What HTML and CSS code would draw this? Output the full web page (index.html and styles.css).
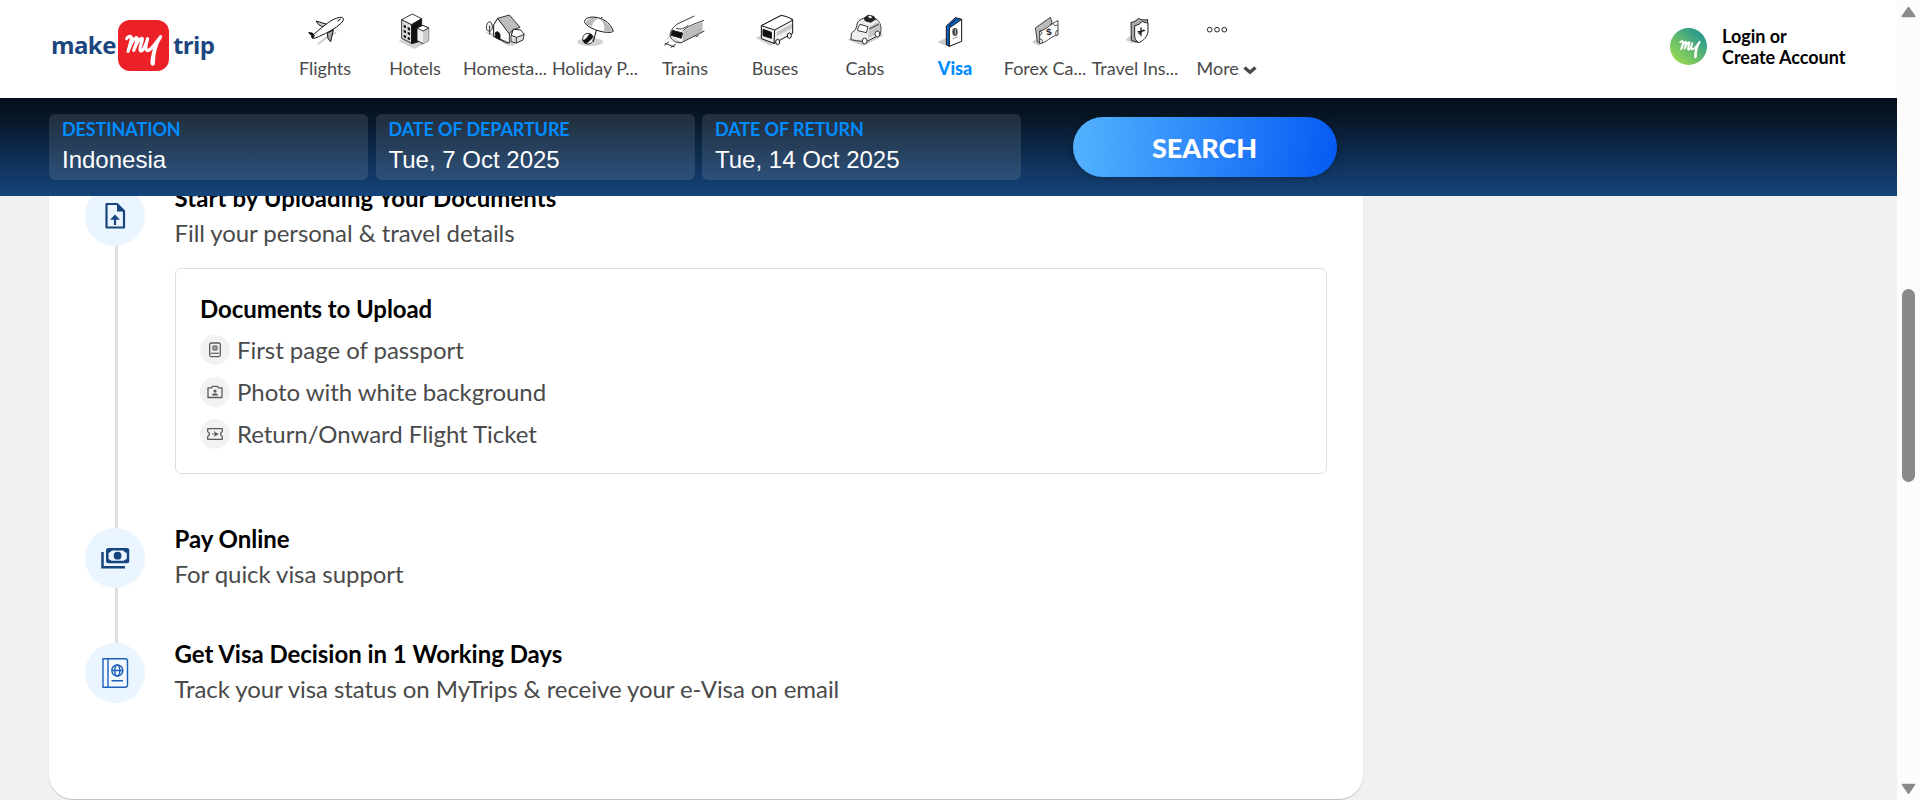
FILE: index.html
```
<!DOCTYPE html>
<html lang="en">
<head>
<meta charset="utf-8">
<title>Indonesia Visa - MakeMyTrip</title>
<link rel="stylesheet" href="styles.css">
</head>
<body>
<div class="viewport">
<div class="page">
  <header class="header">
    <a class="logo">
      <span class="logo-word">make</span>
      <svg class="logo-my" viewBox="234 60 153 153"><rect x="234" y="60" width="153" height="153" rx="36" fill="#ec2127"/><path d="M260 116c3-6 13-10 14-3 1 9-7 29-10 41 6-16 16-38 24-41 7-1 2 14-7 38 8-19 16-35 24-36 8 0-10 30-4 37 7 5 16-16 22-36-6 19-8 36 0 36 12-2 23-22 39-42-16 24-22 50-22 80 0 4-4 3-4 0 0-22 9-52 18-66" fill="none" stroke="#fff" stroke-width="9.500" stroke-linecap="round" stroke-linejoin="round"/></svg>
      <span class="logo-word">trip</span>
    </a>
    <nav class="nav">
      <a class="nav-item">
        <svg class="nav-icon" viewBox="0 0 270 150"><path d="M110 131l34-26 27-11-4 8-22 10-28 22z" fill="#d2d2d2"/><g stroke="#111" stroke-width="3" stroke-linejoin="round"><path d="M138 72l-30-9 8 11 15 8z" fill="#ccc"/><path d="M96 108c12-12 27-23 42-35 18-14 33-21 46-21 9 1 8 9 0 17-17 17-42 29-66 40-13 6-25 10-22-1z" fill="#fff"/><path d="M142 99l2 17 8 9 8-35z" fill="#aaa"/><path d="M86 98l11 1 6 8-5 8-4-9z" fill="#111"/><path d="M172 63l10-6" fill="none"/></g></svg>
        <span class="nav-label">Flights</span>
      </a>
      <a class="nav-item">
        <svg class="nav-icon" viewBox="270 0 270 150"><path d="M356 124l12-8 35 14 20-2 10 4-30 15z" fill="#d2d2d2"/><g stroke="#111" stroke-width="2.5" stroke-linejoin="round"><path d="M365 59l30 15v56l-30-15z" fill="#ddd"/><path d="M365 59l32-17 28 14-30 18z" fill="#fff"/><path d="M395 74l30-18v67l-30 8z" fill="#111"/><path d="M411 84l18-8 17 8v38l-17 9-18-9z" fill="#eee"/><path d="M429 93l17-9v38l-17 9z" fill="#ccc" stroke="none"/><path d="M411 84l18 9 17-9-17-8z" fill="#fff"/></g><path d="M371 74l7 3v8l-7-3zm12 7l7 3v8l-7-3zM371 89l7 3v8l-7-3zm12 6l7 3v8l-7-3zM371 104l7 3v8l-7-3zm12 6l7 3v8l-7-3z" fill="#111"/></svg>
        <span class="nav-label">Hotels</span>
      </a>
      <a class="nav-item">
        <svg class="nav-icon" viewBox="540 0 270 150"><path d="M614 96l27 3 65 28 26-9-34 19-16-1z" fill="#d2d2d2"/><g stroke="#111" stroke-width="2.5" stroke-linejoin="round"><path d="M628 65c-8 2-12 20-6 26 5 5 14 1 15-6 1-10-2-19-9-20zM629 77v27" fill="#eee"/><path d="M641 109V75l12-20 33 41v33l-9-1z" fill="#fff"/><path d="M641 75l12-20 35 41v33l-47-20z" fill="#fff"/><path d="M653 55l35-10 32 37-20 7-13 12z" fill="#bdbdbd"/><path d="M646 112V98c4-6 14-1 14 7v14z" fill="#111"/><path d="M693 106l7-18 22 3 10 14-3 15-20 9-16-4z" fill="#ddd"/><path d="M700 88l22 2 11 13-23 9-16-6z" fill="#fff"/><path d="M709 112v15" fill="none"/></g></svg>
        <span class="nav-label">Homesta...</span>
      </a>
      <a class="nav-item">
        <svg class="nav-icon" viewBox="810 0 270 150"><ellipse cx="931" cy="126" rx="39" ry="12" fill="#d2d2d2"/><g stroke="#111" stroke-width="3" stroke-linejoin="round"><path d="M951 84l-11 41M964 56l2-5" fill="none"/><path d="M914 67c-3-25 70-23 86 27-13 10-74-4-86-27z" fill="#fff"/></g><path d="M918 69c1-11 16-18 39-13-13 2-21 15-20 24-8-3-14-6-19-11zM958 57c11 8 18 20 14 36 11 3 20 4 26 2-5-16-19-30-40-38z" fill="#bbb"/><g stroke="#111" stroke-width="2.5"><circle cx="924" cy="116" r="16" fill="#fff"/><path d="M909 122c7-2 16-12 20-20 5 1 8 4 9 8-5 10-15 19-23 20z" fill="#111"/></g></svg>
        <span class="nav-label">Holiday P...</span>
      </a>
      <a class="nav-item">
        <svg class="nav-icon" viewBox="30 0 270 150"><path d="M102 127l19-18 27 22 50-26-6-12-76 16z" fill="#ccc"/><path d="M138 83l53-35 33 14v34l-67 31-35-18z" fill="#fff"/><path d="M160 95c20-18 38-22 58-29v28l-61 31z" fill="#bdbdbd"/><g fill="none" stroke="#111" stroke-width="2.500" stroke-linejoin="round"><path d="M193 48l-49 23c-15 8-23 24-24 34 4 18 19 24 34 23l69-35M158 94c12-15 32-21 64-33M138 85c18 5 23 0 37-9M105 130l29 11M103 136l14-11M122 143l16-11M197 110l9-3"/><path d="M127 91l31 8-4 16-31-9z" fill="#111"/></g></svg>
        <span class="nav-label">Trains</span>
      </a>
      <a class="nav-item">
        <svg class="nav-icon" viewBox="300 0 270 150"><path d="M377 113l18-9 35 28-9 6z" fill="#d2d2d2"/><g stroke="#111" stroke-width="3" stroke-linejoin="round"><path d="M394 77l60-31 34 12v42l-56 30-38-14z" fill="#eee"/><path d="M394 77l58-30c6-2 36 8 35 14l-53 29z" fill="#fff"/><path d="M434 90l-2 42" fill="none"/><path d="M399 88l25 9v18l-25-8z" fill="#111"/><path d="M440 96l46-25v14l-46 23z" fill="#c6c6c6" stroke="none"/><ellipse cx="443" cy="126" rx="6" ry="8" fill="#fff"/><ellipse cx="478" cy="107" rx="6" ry="8" fill="#fff"/></g></svg>
        <span class="nav-label">Buses</span>
      </a>
      <a class="nav-item">
        <svg class="nav-icon" viewBox="570 0 270 150"><path d="M653 119l21-11 90-4-64 34z" fill="#ccc"/><g stroke="#111" stroke-width="2.5" stroke-linejoin="round"><path d="M663 119l1-19 13-12 6-21c8-14 39-19 55-10 13 7 18 24 13 47l-43 21-28-3z" fill="#eee"/><path d="M719 80l28-17c4 11 4 22 2 34l-36 19z" fill="#c6c6c6" stroke="none"/><path d="M683 86l7-13 24 7-5 18-25-6z" fill="#fff"/><path d="M717 87l29-14" fill="none"/><path d="M703 54l11-8 17 3 5 9-14 9-17-5z" fill="#222"/><path d="M710 51l9-5 11 5-8 5z" fill="#fff"/><ellipse cx="704" cy="123" rx="7" ry="9" fill="#fff"/><ellipse cx="742" cy="102" rx="7" ry="9" fill="#fff"/></g></svg>
        <span class="nav-label">Cabs</span>
      </a>
      <a class="nav-item active">
        <svg class="nav-icon" viewBox="0 0 270 150"><path d="M82 126l27-13v26z" fill="#ccc"/><g stroke="#111" stroke-width="3" stroke-linejoin="round"><path d="M109 78l27-25 19 5-37 28v53l-9-5z" fill="#0a6ad0"/><path d="M118 84l37-26v66l-37 15z" fill="#fff"/><path d="M116 79l24-23" fill="none"/></g><ellipse cx="135" cy="96" rx="8" ry="12" fill="#444"/><path d="M136 87v17" stroke="#fff" stroke-width="2"/><path d="M129 116l14-6" stroke="#555" stroke-width="2"/></svg>
        <span class="nav-label">Visa</span>
      </a>
      <a class="nav-item">
        <svg class="nav-icon" viewBox="120 0 270 150"><path d="M216 126l18-11 10 15-7 7z" fill="#ccc"/><g stroke="#222" stroke-width="2.5" stroke-linejoin="round"><path d="M226 84l45-32 5 16-36 60-8-3z" fill="#bbb"/><path d="M239 93c20-3 34-23 55-31v43c-23 3-34 24-55 26z" fill="#fff"/><path d="M239 93c8 0 8 8 1 14M294 91c-7 0-8 8-6 15M240 117c7 0 8 5 6 12M280 70c0 7 5 8 13 5" fill="none"/></g><text x="259" y="106" class="dollar" transform="rotate(-8 266 95)">$</text></svg>
        <span class="nav-label">Forex Ca...</span>
      </a>
      <a class="nav-item">
        <svg class="nav-icon" viewBox="390 0 270 150"><path d="M497 119l17-13 15 23-15-1zM505 31h12" fill="#ccc" stroke="#ddd"/><g stroke="#222" stroke-width="3" stroke-linejoin="round"><path d="M513 67c8 0 17-5 22-12 9 5 17 6 28 4l-1 37c-5 15-14 25-30 31l-18-6z" fill="#aaa"/><path d="M524 77c9-1 17-5 23-13 5 4 11 5 17 4v28c-3 15-13 25-27 32-9-5-13-12-13-20z" fill="#fff"/></g><path d="M536 103l15-14M543 82v27M533 96l22-5" stroke="#222" stroke-width="4"/></svg>
        <span class="nav-label">Travel Ins...</span>
      </a>
      <a class="nav-item more">
        <svg class="nav-icon" viewBox="660 0 270 150" fill="#fff" stroke="#222" stroke-width="3"><circle cx="749" cy="89" r="7"/><circle cx="771" cy="89" r="7"/><circle cx="793" cy="89" r="7"/></svg>
        <span class="nav-label">More <svg class="chevron" viewBox="0 0 14 9"><path d="M1.500 1.500L7 6.200 12.500 1.500" fill="none" stroke="#4a4a4a" stroke-width="3.400"/></svg></span>
      </a>
    </nav>
    <div class="login">
      <svg class="avatar" viewBox="0 0 37 37"><defs><linearGradient id="g" x1="0.1" y1="1" x2="0.9" y2="0.1"><stop offset="0" stop-color="#a4e04a"/><stop offset="1" stop-color="#219393"/></linearGradient></defs><circle cx="18.500" cy="18.500" r="18.500" fill="url(#g)"/><path transform="translate(-40.500 -8.200) scale(.195)" d="M260 116c3-6 13-10 14-3 1 9-7 29-10 41 6-16 16-38 24-41 7-1 2 14-7 38 8-19 16-35 24-36 8 0-10 30-4 37 7 5 16-16 22-36-6 19-8 36 0 36 12-2 23-22 39-42-16 24-22 50-22 80 0 4-4 3-4 0 0-22 9-52 18-66" fill="none" stroke="#fff" stroke-width="9.500" stroke-linecap="round"/></svg>
      <span>Login or<br>Create Account</span>
    </div>
  </header>

  <section class="search-bar">
    <div class="field"><span class="field-label">DESTINATION</span><span class="field-value">Indonesia</span></div>
    <div class="field"><span class="field-label">DATE OF DEPARTURE</span><span class="field-value">Tue, 7 Oct 2025</span></div>
    <div class="field"><span class="field-label">DATE OF RETURN</span><span class="field-value">Tue, 14 Oct 2025</span></div>
    <button class="search-btn">SEARCH</button>
  </section>

  <main class="content">
    <div class="card">
      <section class="step step-upload">
        <div class="rail"><span class="bubble"><svg class="step-icon" viewBox="0 0 60 60"><path d="M22 18h10l7 7V41.500H21.500V18z" fill="none" stroke="#17467f" stroke-width="2.200" stroke-linejoin="round"/><path d="M32 17.500v8h8zM30 28.500l-5 5.300h3.900v5.200h2.200v-5.200H35z" fill="#17467f"/></svg></span></div>
        <div class="step-body">
          <h3 class="title-upload">Start by Uploading Your Documents</h3>
          <p>Fill your personal &amp; travel details</p>
          <div class="docs">
            <h4>Documents to Upload</h4>
            <ul>
              <li><svg class="doc-icon" viewBox="0 0 30 30"><circle cx="15" cy="15" r="15" fill="#f2f2f2"/><rect x="9.700" y="8" width="10.600" height="13.600" rx="1.500" fill="none" stroke="#5b5b5b" stroke-width="1.300"/><circle cx="15" cy="13" r="3" fill="#777"/><path d="M12 13h6M15 10v6" stroke="#ccc" stroke-width=".5"/><path d="M11 18.300h8" stroke="#5b5b5b" stroke-width="1.200"/></svg><span>First page of passport</span></li>
              <li><svg class="doc-icon" viewBox="0 0 30 30"><circle cx="15" cy="15" r="15" fill="#f2f2f2"/><path d="M8 10.800h3.500l1-1.500h5l1 1.500H22v9.700H8z" fill="none" stroke="#5b5b5b" stroke-width="1.300" stroke-linejoin="round"/><circle cx="15" cy="14" r="1.600" fill="#5b5b5b"/><path d="M12 18.500c0-3 6-3 6 0z" fill="#5b5b5b"/></svg><span>Photo with white background</span></li>
              <li><svg class="doc-icon" viewBox="0 0 30 30"><circle cx="15" cy="15" r="15" fill="#f2f2f2"/><path d="M7.700 9.700h14.600v3c-2.300 1-2.300 3.800 0 4.600v3H7.700v-3c2.300-.8 2.300-3.600 0-4.600z" fill="none" stroke="#5b5b5b" stroke-width="1.300" stroke-linejoin="round"/><path d="M14 12l3.500 2.500 1.500.5-1.500.7-3.500 2 .8-2.200-2.800-.3v-.7l2.800 0z" fill="#5b5b5b"/></svg><span>Return/Onward Flight Ticket</span></li>
            </ul>
          </div>
        </div>
      </section>
      <section class="step step-pay">
        <div class="rail"><span class="bubble"><svg class="step-icon" viewBox="0 0 60 60"><path d="M17.500 24v15.200H40" fill="none" stroke="#17467f" stroke-width="2.500"/><rect x="22.300" y="21.300" width="20.700" height="12.700" rx="1" fill="#eaf5ff" stroke="#17467f" stroke-width="2.500"/><path d="M22 21h5c0 2-2 4-5 4zm21 0h-5c0 2 2 4 5 4zM22 35h5c0-2-2-4-5-4zm21 0h-5c0-2 2-4 5-4z" fill="#17467f"/><circle cx="32.600" cy="27.700" r="3.900" fill="#17467f"/></svg></span></div>
        <div class="step-body"><h3>Pay Online</h3><p>For quick visa support</p></div>
      </section>
      <section class="step step-decision">
        <div class="rail"><span class="bubble"><svg class="step-icon" viewBox="0 0 60 60" fill="none" stroke="#1d60bb" stroke-width="1.400"><path d="M18 15.700h22c1.500 0 2.500 1 2.500 2.300v24c0 1.300-1 2.300-2.500 2.300H18z" fill="#f3f9ff"/><path d="M23 15.700v28.600"/><circle cx="32.300" cy="27.500" r="5.500"/><ellipse cx="32.300" cy="27.500" rx="2.500" ry="5.500"/><path d="M27 27.500h10.600M26.500 37.700h11.500"/></svg></span></div>
        <div class="step-body"><h3>Get Visa Decision in 1 Working Days</h3><p>Track your visa status on MyTrips &amp; receive your e-Visa on email</p></div>
      </section>
    </div>
  </main>
</div>
<div class="scrollbar">
  <svg class="arrow" viewBox="0 0 15 12"><path d="M7.500 1.700L13.500 10.300H1.500z" fill="#8a8a8a" stroke="#8a8a8a" stroke-width="2" stroke-linejoin="round"/></svg>
  <div class="thumb"></div>
  <svg class="arrow" viewBox="0 0 15 12"><path d="M7.500 10.300L1.500 1.500H13.500z" fill="#8a8a8a" stroke="#8a8a8a" stroke-width="1.500" stroke-linejoin="round"/></svg>
</div>
</div>
</body>
</html>
```

FILE: styles.css
```
* { box-sizing: border-box; }
body, h3, h4, p, ul { margin: 0; padding: 0; }
body { font-family: Lato, "Liberation Sans", sans-serif; color: #000; overflow: hidden; }
.viewport { display: flex; width: 1920px; height: 800px; overflow: hidden; }
.page { width: 1897px; height: 800px; display: flex; flex-direction: column; background: #f1f1f1; }

.header { height: 98px; flex: none; display: flex; background: #fff; }
.logo { display: flex; width: 280px; padding-left: 51px; height: 91px; align-items: center; }
.logo-word { width: 63px; font: 700 24px/30px "Open Sans", sans-serif; color: #1b4680; letter-spacing: -0.6px; padding-bottom: 2px; }
.logo-my { width: 51px; height: 51px; margin: 0 4px; flex: none; }
.nav { display: flex; }
.nav-item { width: 90px; display: flex; flex-direction: column; align-items: center; color: #4a4a4a; font-size: 18px; }
.nav-icon { width: 90px; height: 50px; flex: none; }
.nav-label { margin-top: 6px; line-height: 24px; white-space: nowrap; }
.active { color: #008cff; font-weight: 900; }
.more .nav-label { padding-left: 4px; }
.chevron { width: 14px; height: 9px; }
.dollar { font: 700 28px "Liberation Sans", sans-serif; fill: #222; }
.login { display: flex; align-items: flex-start; margin-left: 400px; gap: 15px; padding-top: 28px; font-weight: 700; font-size: 18px; line-height: 21px; white-space: nowrap; }
.login span { margin-top: -2px; }
.avatar { width: 37px; height: 37px; }

.search-bar { height: 98px; flex: none; display: flex; align-items: flex-start; gap: 7.5px; padding: 16px 0 0 49px; background: linear-gradient(#050f1b, #06121f 12%, #15457c); position: relative; z-index: 1; }
.field { width: 319px; height: 66px; border-radius: 6px; background: rgba(255,255,255,.11); padding: 4px 13px; display: flex; flex-direction: column; }
.field-label { color: #008cff; font-weight: 700; font-size: 18px; line-height: 22px; letter-spacing: -0.1px; }
.field-value { color: #fff; font: 24px/30px "Liberation Sans", sans-serif; margin-top: 5px; }
.search-btn { width: 264px; height: 60px; margin: 3px 0 0 44px; border: 0; border-radius: 30px; background: linear-gradient(93deg, #53b2fe, #065af3); box-shadow: 0 1px 7px rgba(0,0,0,.25); color: #fff; font: 900 27px Lato, sans-serif; }

.content { height: 604px; padding-left: 49px; }
.card { width: 1314px; height: 603px; background: #fff; border-radius: 0 0 24px 24px; box-shadow: 0 1px 1px rgba(0,0,0,.2); padding-left: 36px; overflow: hidden; }
.step { display: flex; }
.step-upload { margin-top: -10px; height: 342px; }
.step-pay { height: 115px; }
.rail { width: 60px; margin-right: 29.5px; display: flex; flex-direction: column; flex: none; }
.rail::after { content: ""; flex: 1; width: 3px; margin-left: 30px; background: #e0e0e0; }
.step-decision .rail::after { display: none; }
.bubble { width: 60px; height: 60px; border-radius: 50%; background: #eaf5ff; flex: none; }
.step-icon { display: block; width: 60px; height: 60px; }
h3, h4 { font-size: 24px; line-height: 29px; font-weight: 700; letter-spacing: -0.03px; }
h4 { letter-spacing: -0.08px; }
.title-upload { letter-spacing: 0.07px; }
p { font-size: 24px; line-height: 29px; color: #4a4a4a; letter-spacing: -0.07px; }
.step-body h3 { margin-top: -3px; }
.step-body p { margin-top: 6px; }
.step-pay h3, .step-decision h3 { margin-top: -4px; }
.docs { width: 1152px; height: 206px; margin: 21px 0 0 0.5px; border: 1px solid #e0e0e0; border-radius: 6px; padding: 25px 24px; }
.docs ul { list-style: none; margin-top: 6px; display: grid; }
.docs li { display: flex; align-items: center; gap: 7px; height: 42px; font-size: 24px; color: #4a4a4a; letter-spacing: -0.04px; }
.docs li span { margin-top: -2px; }
.doc-icon { width: 30px; height: 30px; }

.scrollbar { width: 23px; height: 800px; background: #fcfcfc; display: flex; flex-direction: column; align-items: center; padding-top: 6px; }
.arrow { width: 15px; height: 12px; flex: none; }
.thumb { width: 13px; height: 193px; border-radius: 7px; background: #8a8a8a; margin: 271px 0 301px; flex: none; }
```
